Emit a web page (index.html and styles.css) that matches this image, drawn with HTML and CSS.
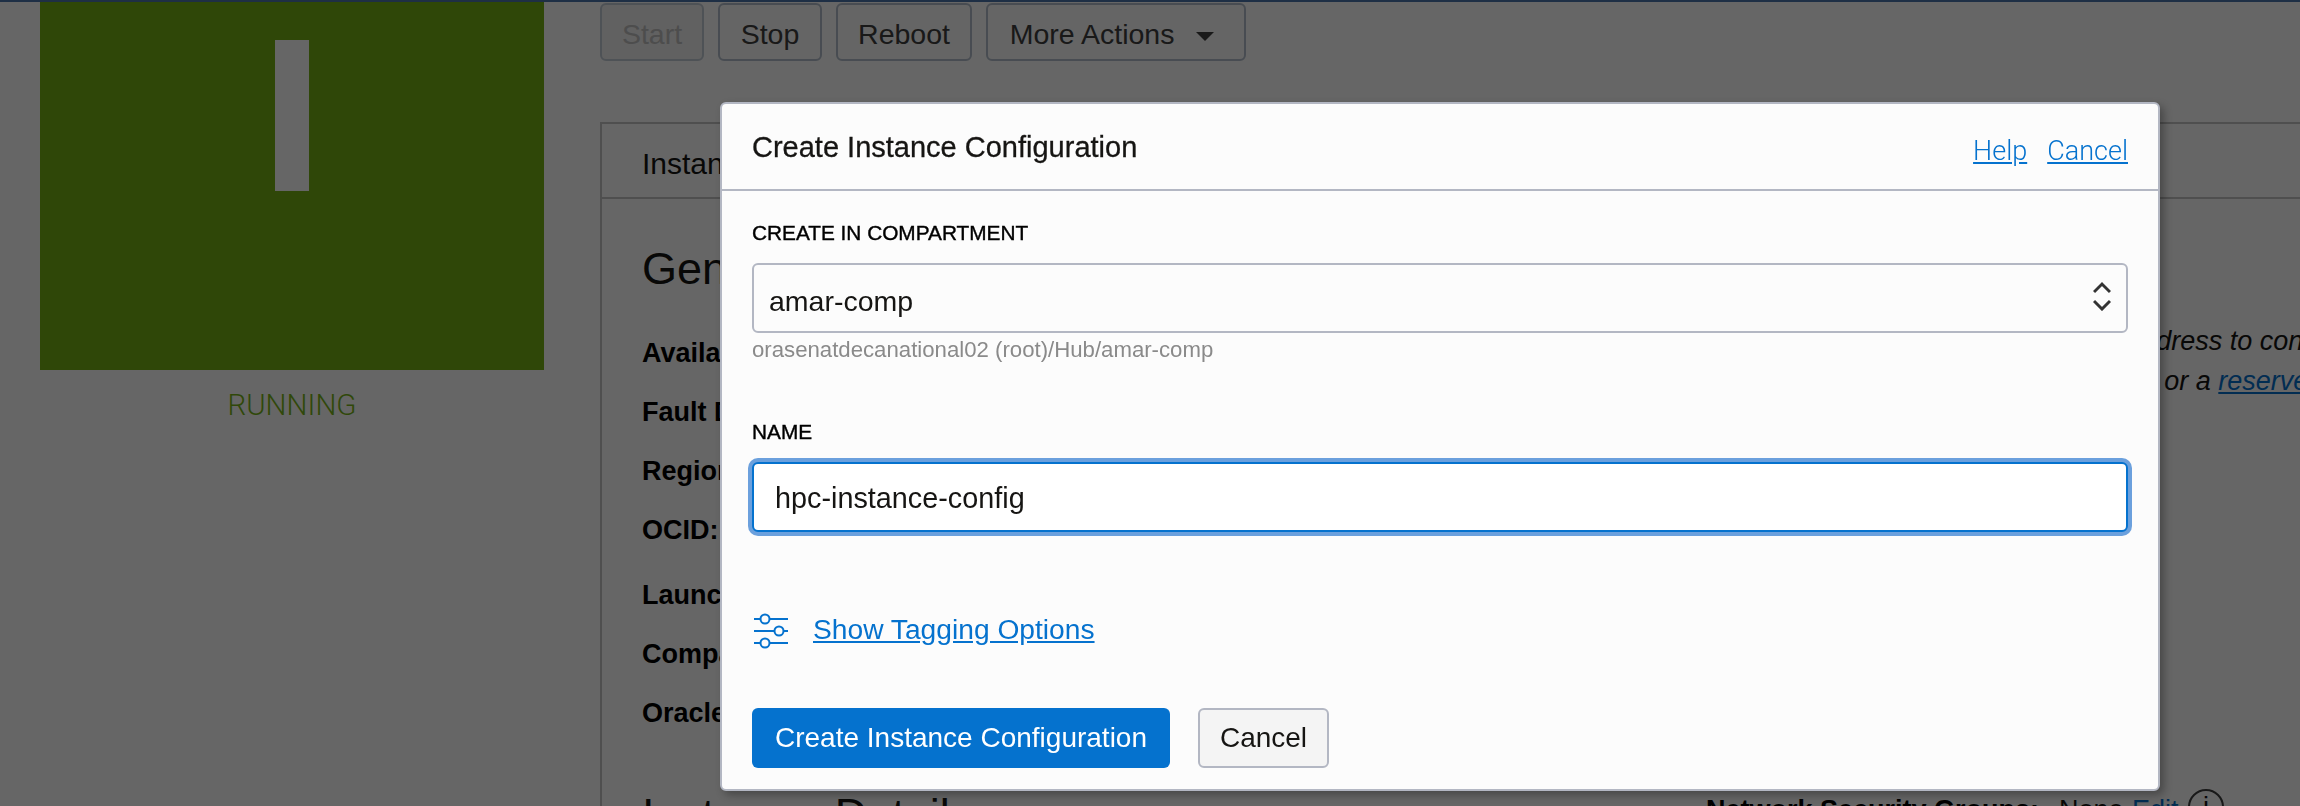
FILE: index.html
```html
<!DOCTYPE html>
<html lang="en">
<head>
	<meta charset="UTF-8">
	<title>Instance Details - Create Instance Configuration</title>
	<link rel="stylesheet" href="styles.css">
</head>
<body>
	<div id="topbar"></div>
	<div id="page">
		<div id="side">
			<div class="status-icon"><div class="status-bar"></div></div>
			<div class="status-text">RUNNING</div>
		</div>
		<div id="main">
			<div class="actions">
				<button class="btn" disabled>Start</button>
				<button class="btn">Stop</button>
				<button class="btn">Reboot</button>
				<button class="btn">More Actions <span class="caret"></span></button>
			</div>
			<div class="panel">
				<div class="panel-head">Instance Information</div>
				<div class="panel-body">
					<div class="col-left">
						<h2>General Information</h2>
						<div class="row">Availability Domain:</div>
						<div class="row">Fault Domain:</div>
						<div class="row">Region:</div>
						<div class="row">OCID:</div>
						<div class="row row-wide">Launched:</div>
						<div class="row">Compartment:</div>
						<div class="row">Oracle Cloud Agent:</div>
						<h2 class="details-title">Instance <span class="details-word">Details</span></h2>
					</div>
					<div class="col-right">
						<p class="note">You can always use your public IP address to connect</p>
						<p class="note">either an ephemeral public IP address or a <a href="#">reserved</a></p>
						<div class="nsg">
							<b>Network Security Groups:</b>
							<span class="nsg-none">None</span>
							<a href="#">Edit</a>
							<span class="info">i</span>
						</div>
					</div>
				</div>
			</div>
		</div>
	</div>

	<div id="backdrop"></div>

	<div id="dialog">
		<div class="dialog-head">
			<div class="dialog-title">Create Instance Configuration</div>
			<div class="dialog-links">
				<a href="#">Help</a>
				<a href="#">Cancel</a>
			</div>
		</div>
		<div class="dialog-body">
			<label>CREATE IN COMPARTMENT</label>
			<div class="select">
				<span>amar-comp</span>
				<svg width="18" height="30" viewBox="0 0 18 30" fill="none" stroke="#333" stroke-width="3">
					<path d="M1 11 L9 3 L17 11"/>
					<path d="M1 20 L9 28 L17 20"/>
				</svg>
			</div>
			<div class="hint">orasenatdecanational02 (root)/Hub/amar-comp</div>
			<label class="name-label">NAME</label>
			<div class="text-input">hpc-instance-config</div>
			<div class="tagging">
				<svg width="38" height="36" viewBox="0 0 38 36" fill="none" stroke="#0572ce" stroke-width="2">
					<path d="M2 6 H8 M18 6 H36 M2 18 H22 M32 18 H36 M2 30 H8 M18 30 H36"/>
					<circle cx="13" cy="6" r="4.5"/>
					<circle cx="27" cy="18" r="4.5"/>
					<circle cx="13" cy="30" r="4.5"/>
				</svg>
				<a href="#">Show Tagging Options</a>
			</div>
			<div class="dialog-buttons">
				<button class="primary">Create Instance Configuration</button>
				<button class="secondary">Cancel</button>
			</div>
		</div>
	</div>
</body>
</html>
```

FILE: styles.css
```css
html, body {
	height: 806px;
	margin: 0;
	overflow: hidden;
}
body {
	background-color: #fff;
	color: #161513;
	font-family: "Liberation Sans", Arial, sans-serif;
}
#topbar {
	height: 2px;
	background-color: #4b75ac;
}
#page {
	display: flex;
}
#side {
	width: 504px;
	margin: 0 56px 0 40px;
	flex: none;
}
.status-icon {
	display: flex;
	justify-content: center;
	height: 330px;
	padding-top: 38px;
	background-color: #76b216;
}
.status-bar {
	width: 34px;
	height: 151px;
	background-color: #fff;
}
.status-text {
	margin-top: 19px;
	color: #78b518;
	font-family: Roboto, sans-serif;
	font-size: 29.5px;
	font-weight: 300;
	line-height: 32px;
	text-align: center;
}
#main {
	flex: 1;
}
.actions {
	display: flex;
	gap: 14px;
	margin-top: 1px;
}
.btn {
	height: 58px;
	padding: 4px 0 0;
	border: 2px solid #b4bfcc;
	border-radius: 6px;
	background-color: #fcfcfc;
	color: #404040;
	font-family: inherit;
	font-size: 28.5px;
}
.btn:nth-child(1), .btn:nth-child(2) {
	width: 104px;
}
.btn:nth-child(3) {
	width: 136px;
}
.btn:nth-child(4) {
	width: 260px;
	padding-right: 8px;
}
.btn:disabled {
	background-color: #f2f2f2;
	border-color: #c4ccd6;
	color: #c0c0c0;
}
.caret {
	display: inline-block;
	width: 0;
	height: 0;
	margin-left: 14px;
	border-style: solid;
	border-width: 9px 9px 0;
	border-color: #404040 transparent transparent;
	vertical-align: 3px;
}
.panel {
	width: 1800px;
	margin-top: 61px;
	border-top: 2px solid #c6c6c6;
	border-left: 2px solid #c6c6c6;
}
.panel-head {
	height: 75px;
	padding: 20px 0 0 40px;
	box-sizing: border-box;
	border-bottom: 2px solid #c6c6c6;
	font-size: 30px;
	line-height: 40px;
}
.panel-body {
	display: flex;
	padding-left: 40px;
}
.col-left {
	width: 1064px;
	flex: none;
}
.col-left h2 {
	margin: 43px 0 41px;
	font-size: 45px;
	font-weight: normal;
	line-height: 54px;
	white-space: nowrap;
}
.row {
	height: 32px;
	margin-bottom: 27px;
	color: #000;
	font-size: 27px;
	font-weight: bold;
	line-height: 32px;
}
.row-wide {
	margin-top: 33px;
}
.col-left .details-title {
	margin: 59px 0 0;
}
.details-word {
	margin-left: 10px;
}
.col-right {
	font-size: 27px;
	white-space: nowrap;
}
.note {
	height: 40px;
	margin: 0 0 0 -3px;
	font-style: italic;
	line-height: 40px;
}
.note:first-child {
	margin: 122px 0 0 4px;
}
.note a {
	color: #0572ce;
}
.nsg {
	display: flex;
	align-items: flex-start;
	margin-top: 393px;
	line-height: 32px;
}
.nsg b {
	color: #000;
	width: 353px;
}
.nsg a {
	width: 56px;
	color: #0572ce;
	text-decoration: none;
}
.nsg-none {
	width: 73px;
}
.info {
	width: 32px;
	height: 32px;
	margin-top: -5px;
	border: 2px solid #404040;
	border-radius: 50%;
	text-align: center;
}
#backdrop {
	position: fixed;
	top: 0;
	left: 0;
	right: 0;
	bottom: 0;
	background-color: rgba(0, 0, 0, 0.6);
}
#dialog {
	position: absolute;
	top: 102px;
	left: 720px;
	width: 1440px;
	height: 689px;
	box-sizing: border-box;
	border: 2px solid #b3b7c3;
	border-radius: 6px;
	background-color: #fcfcfc;
	box-shadow: 4px 4px 8px rgba(0, 0, 0, 0.3);
}
.dialog-head {
	display: flex;
	justify-content: space-between;
	align-items: center;
	height: 85px;
	padding: 0 30px;
	border-bottom: 2px solid #b3b7c3;
}
.dialog-title {
	padding-top: 2px;
	font-size: 29px;
	-webkit-text-stroke: 0.3px #161513;
}
.dialog-links {
	display: flex;
	gap: 20px;
	padding-top: 8px;
	font-family: Roboto, sans-serif;
	font-size: 27px;
	font-weight: 300;
}
.dialog-links a {
	color: #0572ce;
}
.dialog-body {
	padding: 30px;
}
label {
	display: block;
	margin-bottom: 18px;
	color: #000;
	font-size: 20.8px;
	line-height: 24px;
	-webkit-text-stroke: 0.4px #000;
}
.name-label {
	margin-top: 58px;
}
.select {
	display: flex;
	justify-content: space-between;
	align-items: center;
	height: 70px;
	box-sizing: border-box;
	padding: 6px 15px 0;
	border: 2px solid #b3b7c3;
	border-radius: 6px;
	font-size: 28.5px;
}
.select svg {
	margin: -10px 0 0;
}
.hint {
	margin-top: 5px;
	color: #8a8a8a;
	font-size: 22.2px;
	line-height: 24px;
}
.text-input {
	height: 70px;
	box-sizing: border-box;
	padding: 0 21px;
	border: 2px solid #0572ce;
	border-radius: 6px;
	background-color: #fff;
	box-shadow: 0 0 0 4px #6ba0dd;
	font-size: 28.8px;
	line-height: 68px;
}
.tagging {
	display: flex;
	align-items: center;
	gap: 23px;
	height: 36px;
	margin-top: 81px;
	font-size: 28.2px;
}
.tagging a {
	margin-top: -4px;
	color: #0572ce;
}
.dialog-buttons {
	display: flex;
	gap: 28px;
	margin-top: 59px;
}
.dialog-buttons button {
	height: 60px;
	border-radius: 6px;
	font-family: inherit;
	font-size: 28px;
}
.primary {
	width: 418px;
	border: 0;
	background-color: #0572ce;
	color: #fff;
}
.secondary {
	width: 131px;
	border: 2px solid #b3b7c3;
	background-color: #f4f4f4;
	color: #161513;
}
```
